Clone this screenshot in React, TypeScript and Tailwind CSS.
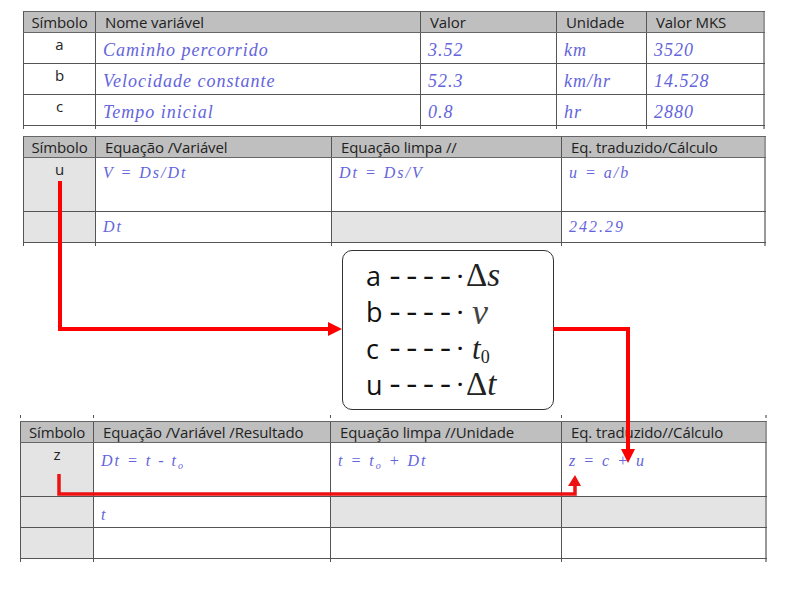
import React from 'react'

type Cell = { t?: string; sub?: string; after?: string; shade?: boolean; center?: boolean }

const sans = "font-['Open_Sans',sans-serif]"
const script = "font-['Liberation_Serif',serif] italic text-[#6464dc]"

// one table: header row, body rows, small stub of the column lines under it
const Sheet = ({ cols, width, left, head, rows, text, heights, top }: {
    cols: string, width: string, left: string, head: string[], rows: Cell[][], text: string, heights: string[], top?: boolean
}) => {
    const Stub = () => (
        <div className="grid h-[3px]" style={{ gridTemplateColumns: cols }}>
            {head.map((h, i) => (
                <div key={h} className={`border-l border-[#555] ${i === head.length - 1 ? 'border-r-2 border-r-[#999]' : ''}`} />
            ))}
        </div>
    )
    return (
        <div className={`${width} ${left}`}>
            {top && <div className="h-[6px]"><Stub /></div>}
            <div className="grid h-[22px] border-t border-b border-[#666] bg-[#bfbfbf]" style={{ gridTemplateColumns: cols }}>
                {head.map((h, i) => (
                    <div key={h} className={`border-l border-[#555] ${sans} text-[15px] leading-[20px] tracking-[-0.1px] text-[#222] ${i === 0 ? 'text-center' : 'pl-[9px]'} ${i === head.length - 1 ? 'border-r-2 border-r-[#999]' : ''}`}>{h}</div>
                ))}
            </div>
            {rows.map((row, r) => (
                <div key={r} className={`grid border-b border-[#555] ${heights[r]}`} style={{ gridTemplateColumns: cols }}>
                    {row.map((c, i) => (
                        <div key={i} className={`overflow-hidden border-l border-[#555] ${c.shade ? 'bg-[#e4e4e4]' : 'bg-white'} ${i === row.length - 1 ? 'border-r-2 border-r-[#999]' : ''} ${c.center ? `text-center ${sans} text-[15px] leading-[22px] text-[#222]` : `pl-[7px] ${script} ${text}`}`}>
                            {c.t}{c.sub && <sub className="text-[10px]">{c.sub}</sub>}{c.after}
                        </div>
                    ))}
                </div>
            ))}
            <Stub />
        </div>
    )
}

const Legend = () => {
    const items = [
        { k: 'a', math: <><span className="not-italic">Δ</span>s</> },
        { k: 'b', math: <span className="pl-[6px] text-[36px] text-[#444]">v</span> },
        { k: 'c', math: <span className="pl-[6px] text-[31px]">t<sub className="not-italic text-[18px]">0</sub></span> },
        { k: 'u', math: <><span className="not-italic">Δ</span>t</> },
    ]
    return (
        <div className="ml-[342px] flex h-[160px] w-[212px] flex-col justify-between rounded-[10px] border border-[#333] bg-white py-[7px] pl-[23px]">
            {items.map(it => (
                <div key={it.k} className="flex h-[35px] items-center">
                    <span className={`w-[24px] ${sans} text-[27px] leading-none text-[#111]`}>{it.k}</span>
                    <span className={`w-[76px] whitespace-nowrap ${sans} text-[20px] font-bold leading-none tracking-[0.8px] text-[#111]`}>– – – – ·</span>
                    <span className="font-['Liberation_Serif',serif] text-[33px] italic leading-none text-[#222]">{it.math}</span>
                </div>
            ))}
        </div>
    )
}

const App = () => {
    return (
        <div className="relative h-[600px] w-[800px] overflow-hidden bg-white pt-[11px]">
            <Sheet
                cols="72px 325px 136px 90px 1fr" width="w-[742px]" left="ml-[23px]"
                text="text-[18px] leading-[26px] tracking-[1px] pt-[4px]"
                head={['Símbolo', 'Nome variável', 'Valor', 'Unidade', 'Valor MKS']}
                heights={['h-[31px]', 'h-[31px]', 'h-[31px]']}
                rows={[
                    [{ t: 'a', center: true }, { t: 'Caminho percorrido' }, { t: '3.52' }, { t: 'km' }, { t: '3520' }],
                    [{ t: 'b', center: true }, { t: 'Velocidade constante' }, { t: '52.3' }, { t: 'km/hr' }, { t: '14.528' }],
                    [{ t: 'c', center: true }, { t: 'Tempo inicial' }, { t: '0.8' }, { t: 'hr' }, { t: '2880' }],
                ]}
            />
            <div className="mt-[7px]">
                <Sheet
                    cols="72px 236px 230px 1fr" width="w-[743px]" left="ml-[23px]"
                    text="text-[16px] leading-[26px] tracking-[2px] pt-[2px]"
                    head={['Símbolo', 'Equação /Variável', 'Equação limpa //', 'Eq. traduzido/Cálculo']}
                    heights={['h-[54px]', 'h-[31px]']}
                    rows={[
                        [{ t: 'u', center: true, shade: true }, { t: 'V = Ds/Dt' }, { t: 'Dt = Ds/V' }, { t: 'u = a/b' }],
                        [{ shade: true }, { t: 'Dt' }, { shade: true }, { t: '242.29' }],
                    ]}
                />
            </div>
            <div className="mt-[4px]">
                <Legend />
            </div>
            <div className="mt-[5px]">
                <Sheet
                    cols="73px 237px 231px 1fr" width="w-[747px]" left="ml-[20px]" top
                    text="text-[16px] leading-[26px] tracking-[2px] pt-[5px]"
                    head={['Símbolo', 'Equação /Variável /Resultado', 'Equação limpa //Unidade', 'Eq. traduzido//Cálculo']}
                    heights={['h-[54px]', 'h-[31px]', 'h-[31px]']}
                    rows={[
                        [{ t: 'z', center: true, shade: true }, { t: 'Dt = t - t', sub: 'o' }, { t: 't = t', sub: 'o', after: ' + Dt' }, { t: 'z = c + u' }],
                        [{ shade: true }, { t: 't' }, { shade: true }, { shade: true }],
                        [{ shade: true }, {}, {}, {}],
                    ]}
                />
            </div>
            {/* red connectors lie over the tables */}
            <svg className="pointer-events-none absolute left-0 top-0" width="800" height="600" fill="none">
                <path d="M60 181V329H330" stroke="#ff0000" strokeWidth="4" />
                <path d="M328 322L342 329L328 336Z" fill="#ff0000" />
                <path d="M553 329H628V449" stroke="#ff0000" strokeWidth="4" />
                <path d="M621 449H635L628 463Z" fill="#ff0000" />
                <path d="M59 474V494H575V485" stroke="#ee1111" strokeWidth="3.5" />
                <path d="M568 486H581L575 475Z" fill="#ee1111" />
            </svg>
        </div>
    )
}

export default App
